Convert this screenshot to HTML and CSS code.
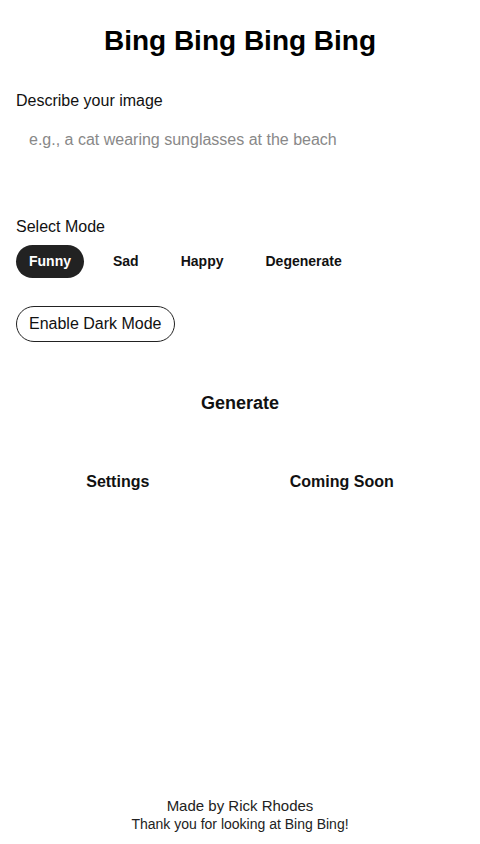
FILE: index.html
```html
<!DOCTYPE html>
<html lang="en">
<head>
  <title>Bing Bing</title>
  <meta charset="UTF-8" />
  <meta name="viewport" content="width=device-width" />
  <link rel="stylesheet" href="styles.css">
</head>
<body>
  <main class="page">
    <h1 class="title">Bing Bing Bing Bing</h1>

    <label class="label" for="prompt">Describe your image</label>
    <input class="prompt" id="prompt" type="text" placeholder="e.g., a cat wearing sunglasses at the beach">

    <div class="label mode-label">Select Mode</div>
    <div class="modes">
      <button class="mode active">Funny</button>
      <button class="mode">Sad</button>
      <button class="mode">Happy</button>
      <button class="mode">Degenerate</button>
    </div>

    <div>
      <button class="dark-toggle">Enable Dark Mode</button>
    </div>

    <button class="generate">Generate</button>

    <div class="links">
      <button class="link">Settings</button>
      <button class="link">Coming Soon</button>
    </div>

    <footer class="footer">
      <div class="made-by">Made by Rick Rhodes</div>
      <div class="thanks">Thank you for looking at Bing Bing!</div>
    </footer>
  </main>
</body>
</html>
```

FILE: styles.css
```css
body {
  margin: 0;
  font-family: "Liberation Sans", Arial, sans-serif;
  color: #111;
  background: #fff;
}

.page {
  display: flex;
  flex-direction: column;
  min-height: 100vh;
  box-sizing: border-box;
  padding: 24px 16px 11px;
}

.title {
  margin: 0;
  font-size: 28px;
  line-height: 34px;
  text-align: center;
  color: #000;
}

.label {
  display: block;
  margin-top: 34px;
  font-size: 16px;
  line-height: 18px;
}

.prompt {
  margin-top: 9px;
  border: none;
  outline: none;
  padding: 12px 13px;
  font-family: inherit;
  font-size: 16px;
  line-height: 18px;
  background: transparent;
}

.prompt::placeholder {
  color: #888;
}

.mode-label {
  margin-top: 57px;
}

.modes {
  display: flex;
  gap: 16px;
  margin-top: 9px;
}

.mode {
  border: none;
  border-radius: 999px;
  padding: 8px 13px;
  font-family: inherit;
  font-size: 14px;
  line-height: 17px;
  font-weight: bold;
  background: transparent;
  color: #111;
}

.mode.active {
  background: #222;
  color: #fff;
}

.dark-toggle {
  margin-top: 28px;
  border: 1px solid #222;
  border-radius: 999px;
  padding: 8px 12px;
  font-family: inherit;
  font-size: 16px;
  line-height: 18px;
  background: #fff;
  color: #111;
}

.generate {
  align-self: center;
  margin-top: 49px;
  border: none;
  background: transparent;
  padding: 0;
  font-family: inherit;
  font-size: 18px;
  line-height: 24px;
  font-weight: bold;
  color: #111;
}

.links {
  display: flex;
  justify-content: space-around;
  margin-top: 57px;
}

.link {
  border: none;
  background: transparent;
  padding: 0;
  font-family: inherit;
  font-size: 16px;
  line-height: 20px;
  font-weight: bold;
  color: #111;
}

.footer {
  margin-top: auto;
  text-align: center;
  color: #222;
}

.made-by {
  font-size: 15px;
  line-height: 19px;
}

.thanks {
  font-size: 14px;
  line-height: 18px;
}
```
